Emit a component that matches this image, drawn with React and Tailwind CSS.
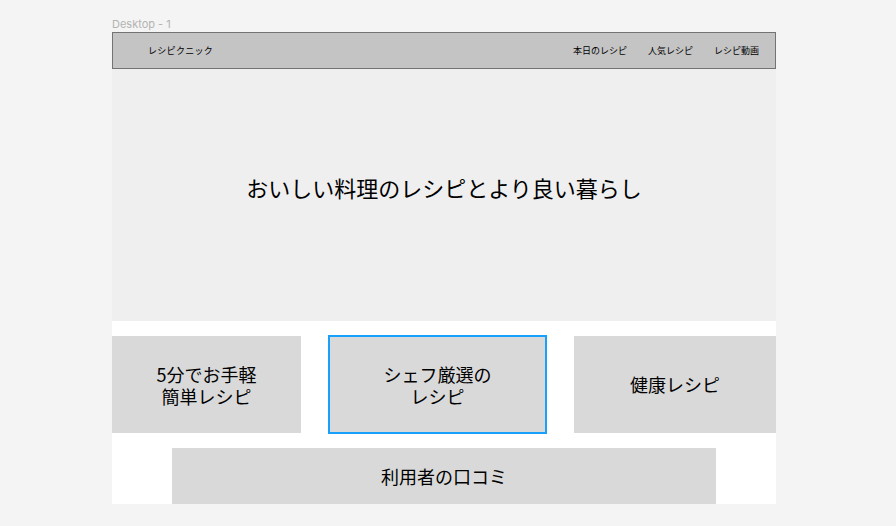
import React from 'react';

const jp = { fontFamily: '"Noto Sans CJK JP", "Noto Sans", sans-serif' };

const navItems = ['本日のレシピ', '人気レシピ', 'レシピ動画'];

const App = () => {
    return (
        <div className="min-h-screen w-full bg-[#f4f4f4] pt-[16px] pl-[112px]" style={jp}>
            <p className="text-[11px] leading-[16px] text-[#b3b3b3]" style={{ fontFamily: 'Inter, sans-serif' }}>Desktop - 1</p>
            <div className="w-[664px] bg-white">
                {/* header */}
                <div className="h-[37px] flex items-center justify-between border border-[#737373] bg-[#c4c4c4] pl-[35px] pr-[16px] text-[9px] text-black">
                    <span className="tracking-[0.3px]">レシピクニック</span>
                    <nav className="flex gap-[21px]">
                        {navItems.map((item) => (
                            <span key={item}>{item}</span>
                        ))}
                    </nav>
                </div>

                {/* hero */}
                <div className="h-[252px] flex items-center justify-center bg-[#efefef] pb-[15px]">
                    <h1 className="text-[22px] text-black">おいしい料理のレシピとより良い暮らし</h1>
                </div>

                {/* cards */}
                <div className="flex items-center h-[99px] mt-[14px]">
                    <div className="w-[189px] h-[97px] flex flex-col items-center justify-center bg-[#d9d9d9] text-[18px] leading-[22px] text-black">
                        <span>5分でお手軽</span>
                        <span>簡単レシピ</span>
                    </div>
                    <div className="ml-[27px] w-[219px] h-[99px] flex flex-col items-center justify-center bg-[#d9d9d9] border-2 border-[#18a0fb] text-[18px] leading-[22px] text-black">
                        <span>シェフ厳選の</span>
                        <span>レシピ</span>
                    </div>
                    <div className="ml-[27px] w-[202px] h-[97px] flex items-center justify-center bg-[#d9d9d9] text-[18px] text-black">
                        健康レシピ
                    </div>
                </div>

                <div className="mt-[14px] ml-[60px] w-[544px] h-[56px] flex items-center justify-center bg-[#d9d9d9] text-[18px] text-black">
                    利用者の口コミ
                </div>
            </div>
        </div>
    );
};

export default App;
